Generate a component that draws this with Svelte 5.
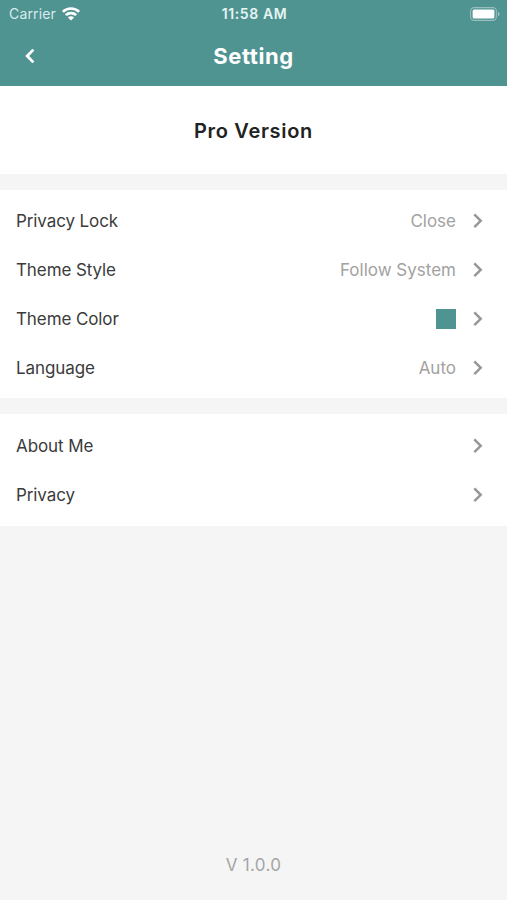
<script>
	const groups = [
		[
			{ title: 'Privacy Lock', value: 'Close' },
			{ title: 'Theme Style', value: 'Follow System' },
			{ title: 'Theme Color', color: true },
			{ title: 'Language', value: 'Auto' }
		],
		[{ title: 'About Me' }, { title: 'Privacy' }]
	];
</script>

<main>
	<header>
		<div class="status-bar">
			<div class="carrier">
				<span>Carrier</span>
				<svg class="wifi" width="18" height="14" viewBox="0 0 18 14">
					<g fill="none" stroke="#fff" stroke-width="2.6">
						<path d="M0.9 4.8C5.4 0.3 12.6 0.3 17.1 4.8" />
						<path d="M3.8 8.2C6.6 5.4 11.4 5.4 14.2 8.2" />
					</g>
					<path d="M9 13.6L5.9 10.5C7.6 8.9 10.4 8.9 12.1 10.5Z" fill="#fff" />
				</svg>
			</div>
			<span class="time">11:58 AM</span>
			<svg class="battery" width="30" height="14" viewBox="0 0 30 14">
				<rect x="0.6" y="0.6" width="25.8" height="12.8" rx="3.6" fill="none" stroke="#fff" stroke-opacity="0.4" stroke-width="1.1" />
				<rect x="2.6" y="2.4" width="21.8" height="9.2" rx="1.6" fill="#fff" />
				<path d="M28 4.8C30 5.8 30 8.2 28 9.2Z" fill="#fff" fill-opacity="0.5" />
			</svg>
		</div>
		<div class="nav-bar">
			<button aria-label="Back">
				<svg width="10" height="16" viewBox="0 0 10 16">
					<path d="M8.4 1.6L2.2 8L8.4 14.4" fill="none" stroke="#fff" stroke-width="2.8" />
				</svg>
			</button>
			<h1>Setting</h1>
		</div>
	</header>

	<section class="pro">
		<h2>Pro Version</h2>
	</section>

	{#each groups as group, i}
		<section class="group" class:links={i === 1}>
			{#each group as item}
				<div class="row">
					<span class="title">{item.title}</span>
					{#if item.color}
						<span class="swatch"></span>
					{:else if item.value}
						<span class="value">{item.value}</span>
					{/if}
					<svg class="arrow" width="10" height="16" viewBox="0 0 10 16">
						<path d="M1.3 1.4L7.7 7.8L1.3 14.2" fill="none" stroke="#979797" stroke-width="2.5" />
					</svg>
				</div>
			{/each}
		</section>
	{/each}

	<footer>V 1.0.0</footer>
</main>

<style>
	:global(body) {
		margin: 0;
	}

	main {
		display: flex;
		flex-direction: column;
		height: 900px;
		background-color: #f5f5f5;
		font-family: Inter, sans-serif;
		color: #3b3b3b;
	}

	header {
		height: 86px;
		background-color: #509492;
		color: white;
	}

	.status-bar {
		display: grid;
		grid-template-columns: 1fr auto 1fr;
		align-items: center;
		height: 27px;
		padding: 0 7px 0 9px;
		font-size: 14px;
	}

	.carrier {
		display: flex;
		align-items: center;
		gap: 6px;
		color: #d8ebea;
		letter-spacing: 0.15px;
	}

	.time {
		color: #e6f4f3;
		font-size: 14px;
		font-weight: 600;
		letter-spacing: 0.6px;
	}

	.battery {
		justify-self: end;
	}

	.nav-bar {
		display: grid;
		grid-template-columns: 60px 1fr 60px;
		align-items: center;
		height: 58px;
	}

	button {
		display: flex;
		padding: 0 0 0 25px;
		border: none;
		background: none;
	}

	h1 {
		margin: 0;
		font-size: 22px;
		font-weight: 700;
		line-height: 28px;
		letter-spacing: 0.6px;
		text-align: center;
	}

	.pro {
		display: flex;
		align-items: center;
		justify-content: center;
		height: 87px;
		padding-top: 1px;
		background-color: white;
	}

	h2 {
		margin: 0;
		color: #222;
		font-size: 20px;
		font-weight: 600;
		letter-spacing: 0.7px;
	}

	.group {
		margin-top: 16px;
		padding: 6px 0;
		background-color: white;
	}

	.links {
		padding: 7px 0;
	}

	.row {
		display: flex;
		align-items: center;
		height: 49px;
		padding: 0 24px 0 16px;
		font-size: 17px;
		letter-spacing: -0.1px;
	}

	.title {
		flex: 1;
	}

	.value {
		color: #a2a2a2;
		letter-spacing: 0;
	}

	.swatch {
		width: 20px;
		height: 20px;
		background-color: #509492;
	}

	.arrow {
		margin-left: 17px;
	}

	footer {
		margin-top: auto;
		padding-bottom: 23px;
		color: #a5a5a5;
		font-size: 17px;
		line-height: 24px;
		letter-spacing: 0.3px;
		text-align: center;
	}
</style>
